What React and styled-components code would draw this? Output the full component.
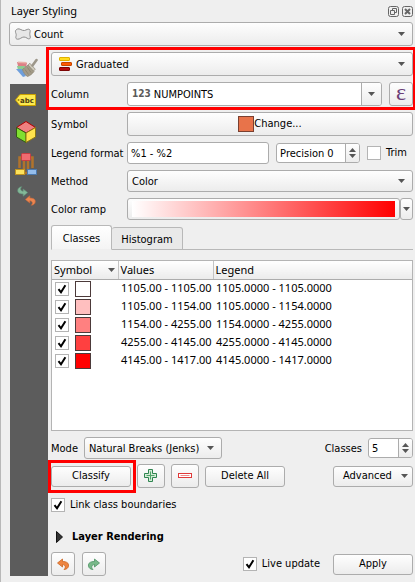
import React, { useState } from "react";
import styled, { createGlobalStyle, css } from "styled-components";

const GlobalStyle = createGlobalStyle`
  *, *::before, *::after { box-sizing: border-box; }
  body {
    margin: 0;
    background: #efefef;
    color: #000;
    font-family: "DejaVu Sans Condensed", "Noto Sans", Tahoma, sans-serif;
    font-size: 11px;
    line-height: 14px;
  }
  button, input, select { font: inherit; color: inherit; margin: 0; }
`;

const raised = css`
  background: linear-gradient(#fefefe, #ececec);
  border: 1px solid #acacac;
  border-radius: 3px;
`;

const Dock = styled.main`
  display: flex;
  flex-direction: column;
  min-height: 100vh;
  padding: 0 2px 6px 8px;
  border-left: 1px solid #b8b8b8;
`;

const TitleBar = styled.header`
  display: flex;
  align-items: center;
  height: 22px;
  padding-left: 2px;
  gap: 3px;
`;

const Title = styled.h1`
  flex: 1;
  margin: 0;
  font: 400 11px/16px "Noto Sans", "Segoe UI", sans-serif;
`;

const TitleButton = styled.button`
  display: flex;
  width: 11px;
  height: 11px;
  padding: 0;
  border: 0;
  background: none;
`;

const ComboFrame = styled.div`
  display: grid;
  align-items: center;
  flex: ${(p) => (p.$fit ? "none" : 1)};
  width: ${(p) => (p.$fit ? "138px" : "auto")};
  min-width: 0;
  height: ${(p) => (p.$tall ? 24 : 22)}px;
  ${raised}
  > * { grid-area: 1 / 1; }
  > svg { pointer-events: none; }
`;

const Select = styled.select`
  appearance: none;
  width: 100%;
  height: 100%;
  padding: 1px 16px 0 ${(p) => (p.$icon ? 24 : 4)}px;
  border: 0;
  background: none;
  outline-offset: -2px;
`;

const LeadIcon = styled.svg`
  width: 18px;
  height: 16px;
  margin-left: 4px;
`;

const Arrow = styled.svg`
  width: 7px;
  height: 4px;
  fill: #555;
`;

const ComboArrow = styled(Arrow)`
  justify-self: end;
  margin-right: 7px;
`;

const Body = styled.div`
  display: flex;
  flex: 1;
  padding-top: 4px;
`;

const Rail = styled.nav`
  display: flex;
  flex-direction: column;
  flex: none;
  width: 38px;
  margin-left: 1px;
  background: #5c5c5c;
`;

const RailTab = styled.button`
  display: flex;
  align-items: center;
  justify-content: center;
  height: ${(p) => (p.$active ? 34 : 32)}px;
  padding: 0 6px 0 0;
  border: 0;
  background: ${(p) => (p.$active ? "#efefef" : "none")};
`;

const RailIcon = styled.svg`
  width: 24px;
  height: 24px;
`;

const Panel = styled.div`
  display: flex;
  flex-direction: column;
  flex: 1;
  min-width: 0;
  padding: 2px 0 0 3px;
`;

const Marked = styled.div`
  position: relative;
  display: flex;
  flex-direction: column;
  gap: 6px;
  &::after {
    content: "";
    position: absolute;
    inset: ${(p) => p.$inset};
    border: 3px solid #f00;
    pointer-events: none;
  }
`;

const Row = styled.div`
  display: flex;
  align-items: center;
  gap: ${(p) => p.$gap || 7}px;
  height: ${(p) => p.$height || 22}px;
  margin-top: ${(p) => p.$top || 0}px;
`;

const FieldLabel = styled.label`
  flex: none;
  width: 69px;
  padding-top: 2px;
  white-space: nowrap;
`;

const Caption = styled.label`
  padding-top: 2px;
  white-space: nowrap;
`;

const Spacer = styled.span`
  flex: 1;
`;

const Field = styled.div`
  display: flex;
  align-items: stretch;
  flex: ${(p) => (p.$width ? "none" : 1)};
  width: ${(p) => (p.$width ? p.$width + "px" : "auto")};
  min-width: 0;
  height: ${(p) => p.$height || 22}px;
  border: 1px solid #acacac;
  border-radius: 3px;
  background: #fff;
  overflow: hidden;
`;

const TextInput = styled.input`
  flex: 1;
  width: 0;
  min-width: 0;
  padding: 2px 3px 0;
  border: 0;
  background: none;
  outline: 0;
`;

const TypeTag = styled.span`
  align-self: center;
  padding-left: 4px;
  color: #5a5a5a;
  font: 700 10px/12px "DejaVu Sans Condensed", "DejaVu Sans", sans-serif;
`;

const DropButton = styled.button`
  display: grid;
  place-items: center;
  width: 20px;
  padding: 0;
  border: 0;
  border-left: 1px solid #acacac;
  background: linear-gradient(#fefefe, #ececec);
`;

const Steppers = styled.div`
  display: flex;
  flex-direction: column;
  width: 14px;
  border-left: 1px solid #acacac;
  background: linear-gradient(#fefefe, #ececec);
`;

const StepButton = styled.button`
  display: flex;
  flex: 1;
  align-items: ${(p) => (p.$up ? "flex-end" : "flex-start")};
  justify-content: center;
  padding: 1px 0;
  border: 0;
  background: none;
`;

const Button = styled.button`
  display: flex;
  align-items: center;
  justify-content: center;
  flex: ${(p) => (p.$width ? "none" : 1)};
  width: ${(p) => (p.$width ? p.$width + "px" : "auto")};
  height: ${(p) => p.$height || 22}px;
  padding: 0;
  ${raised}
`;

const Epsilon = styled.span`
  padding-bottom: 5px;
  color: #6b3f78;
  font: 400 24px/18px "Liberation Serif", serif;
`;

const SplitButton = styled(Button)`
  justify-content: space-between;
  padding: 0 4px 0 9px;
`;

const SymbolSwatch = styled.span`
  flex: none;
  display: block;
  width: 16px;
  height: 16px;
  border: 1px solid ${(p) => p.$edge || "#4c3a3a"};
  background: ${(p) => p.$color};
`;

const CheckLabel = styled.label`
  display: flex;
  align-items: center;
  gap: 5px;
  margin-right: ${(p) => p.$after || 0}px;
  white-space: nowrap;
`;

const Check = styled.input`
  appearance: none;
  flex: none;
  width: 14px;
  height: 14px;
  border: 1px solid #b4b4b4;
  background: #fff;
  &:checked {
    background: #fff
      url("data:image/svg+xml,%3Csvg xmlns='http://www.w3.org/2000/svg' viewBox='0 0 12 12'%3E%3Cpath d='M2.5 6.2 5 9.3 9.4 2.3' fill='none' stroke='%23000' stroke-width='2'/%3E%3C/svg%3E");
  }
`;

const RampFrame = styled.div`
  display: flex;
  flex: 1;
  height: 22px;
`;

const RampButton = styled.button`
  flex: 1;
  padding: 2px 4px;
  ${raised}
`;

const Ramp = styled.span`
  display: block;
  height: 16px;
  background: linear-gradient(90deg, #fff, #f00);
`;

const RampDrop = styled.button`
  display: grid;
  place-items: center;
  width: 13px;
  padding: 0;
  ${raised}
`;

const Tabs = styled.div`
  display: flex;
  align-items: flex-end;
  height: 25px;
  margin: 5px 0 10px;
  box-shadow: inset 0 -1px #b8b8b8;
`;

const Tab = styled.button`
  width: ${(p) => (p.$active ? 61 : 71)}px;
  height: ${(p) => (p.$active ? 25 : 23)}px;
  padding: 2px 0 0;
  border: 1px solid #b8b8b8;
  border-bottom-color: ${(p) => (p.$active ? "#efefef" : "#b8b8b8")};
  border-left-width: ${(p) => (p.$active ? 1 : 0)}px;
  border-radius: 3px 3px 0 0;
  background: ${(p) => (p.$active ? "linear-gradient(#fff, #f4f4f4)" : "#e9e9e9")};
`;

const TableFrame = styled.div`
  flex: 1;
  min-height: 120px;
  border: 1px solid #b4b4b4;
  background: #fff;
`;

const Table = styled.table`
  width: 100%;
  table-layout: fixed;
  border-collapse: collapse;
  font: 11px/18px "Noto Sans", "Segoe UI", sans-serif;
`;

const HeadCell = styled.th`
  width: ${(p) => (p.$width ? p.$width + "px" : "auto")};
  height: 18px;
  padding: 0 3px 0 2px;
  border-bottom: 1px solid #acacac;
  border-right: ${(p) => (p.$width ? "1px solid #c4c4c4" : "0")};
  background: linear-gradient(#fff, #ebebeb);
  font-weight: 400;
  text-align: left;
`;

const HeadContent = styled.span`
  display: flex;
  align-items: center;
  justify-content: space-between;
`;

const Cell = styled.td`
  height: 18px;
  padding: 0 0 0 3px;
  white-space: nowrap;
  overflow: hidden;
  line-height: 16px;
  vertical-align: top;
`;

const SymbolCell = styled.label`
  display: flex;
  align-items: center;
  gap: 6px;
  height: 18px;
`;

const Group = styled.button`
  display: flex;
  align-items: center;
  gap: 9px;
  height: 18px;
  margin: 15px 0 6px 5px;
  padding: 0;
  border: 0;
  background: none;
  font-weight: 700;
`;

const Glyph = styled.svg`
  width: ${(p) => p.$size}px;
  height: ${(p) => p.$size}px;
`;

const Down = ({ as: Shape = Arrow }) => (
  <Shape viewBox="0 0 7 4" aria-hidden="true">
    <path d="M0 0h7L3.500 4z" />
  </Shape>
);

const Up = () => (
  <Arrow viewBox="0 0 7 4" aria-hidden="true">
    <path d="M0 4h7L3.500 0z" />
  </Arrow>
);

function Combo({ id, label, value, icon, tall, fit }) {
  return (
    <ComboFrame $tall={tall} $fit={fit}>
      {icon}
      <Select id={id} aria-label={label} $icon={Boolean(icon)} defaultValue={value}>
        <option>{value}</option>
      </Select>
      <Down as={ComboArrow} />
    </ComboFrame>
  );
}

function Spin({ id, label, prefix = "", initial, width }) {
  const [value, setValue] = useState(initial);
  return (
    <Field $width={width} $height={20}>
      <TextInput
        id={id}
        aria-label={label}
        value={prefix + value}
        onChange={(e) => setValue(Number(e.target.value.replace(/\D/g, "")))}
      />
      <Steppers>
        <StepButton $up aria-label="Increase" onClick={() => setValue(value + 1)}><Up /></StepButton>
        <StepButton aria-label="Decrease" onClick={() => setValue(Math.max(0, value - 1))}><Down /></StepButton>
      </Steppers>
    </Field>
  );
}

const PolygonIcon = () => (
  <LeadIcon viewBox="0 0 18 16">
    <path d="M3.500 3C5.500 2 8 5 10.500 4.500C12.500 4 14 2.500 15.500 3.500C17 4.500 15.500 7 15.800 8.500C16 10.500 17 12 15.500 12.800C14 13.500 12.500 11 10 11C7.500 11 6 13.500 3.500 13.200C.5 12.800 2.500 10 2.200 8.500C2 7 0 4.500 3.500 3Z" fill="#e7e7e7" stroke="#8d8d8d" />
  </LeadIcon>
);

const GraduatedIcon = () => (
  <LeadIcon viewBox="0 0 18 16">
    <rect x="3.500" y="1.500" width="10" height="3" rx=".5" fill="#ffdc1c" stroke="#e0b000" />
    <rect x="5.500" y="6.500" width="10" height="3" rx=".5" fill="#ff5a00" stroke="#c64600" />
    <rect x="3.500" y="11.500" width="10" height="3" rx=".5" fill="#b80c0c" stroke="#7d0505" />
  </LeadIcon>
);

const BrushIcon = () => (
  <RailIcon viewBox="0 0 24 24">
    <path d="M3 7 13 8l-1 4-8-1z" fill="#dd7f86" />
    <path d="M4 6.500 13 7l-1 1.500-8-.5z" fill="#e9b0a8" />
    <path d="M3 11h8l-1 5-6-1z" fill="#8ccb90" />
    <path d="M2 14l6 0 4 7-3 1z" fill="#6f9fdc" />
    <path d="M8.500 14.500 14 10l6 6.500c-1.500 2-3.500 4-6.500 5-2.500-1.500-4-4-5-7z" fill="#a39b88" stroke="#867e6d" strokeWidth=".7" />
    <path d="m11 14.500 3.500 5M13.500 12.500l3.500 5" stroke="#857c6a" strokeWidth=".7" />
    <path d="m14 10 1.800-1.800 5.500 6L19.500 16z" fill="#cfcabb" stroke="#8c8678" strokeWidth=".7" />
    <path d="M18.500 10.500 22.500 5" stroke="#9d978a" strokeWidth="2.600" strokeLinecap="round" />
  </RailIcon>
);

const LabelIcon = () => (
  <RailIcon viewBox="0 0 24 24">
    <path d="M1.500 12 5 7.500Q5.500 6.500 7 6.500H21.500V17.500H7Q5.500 17.500 5 16.500z" fill="#fce94f" stroke="#c9a000" />
    <circle cx="4.500" cy="12" r="1" fill="#a18510" />
    <text x="6" y="15" fontFamily="DejaVu Sans, sans-serif" fontWeight="700" fontSize="7" fill="#4d3d10">abc</text>
  </RailIcon>
);

const CubeIcon = () => (
  <RailIcon viewBox="0 0 24 24">
    <path d="m12 1.500 9.500 6L12 13 2.500 7.500z" fill="#f08080" stroke="#b30000" />
    <path d="m2.500 7.500 9.500 5.500v9.500L2.500 17z" fill="#80e030" stroke="#315d12" />
    <path d="M21.500 7.500 12 13v9.500l9.500-5.500z" fill="#ffe34d" stroke="#8c7610" />
  </RailIcon>
);

const DiagramIcon = () => (
  <RailIcon viewBox="0 0 24 24">
    <path d="M5.500 16V5.500H9M10 9v12h4V9M15 5.500h3.500V16" fill="none" stroke="#b0732c" strokeWidth="2.500" />
    <rect x="7.500" y="1.500" width="9" height="7" rx="1" fill="#ef6b70" stroke="#c93c42" />
    <rect x="1.500" y="17.500" width="9" height="5" fill="#fce25c" stroke="#bd9320" />
    <rect x="13.500" y="17.500" width="9" height="5" fill="#94bdec" stroke="#4c79ad" />
  </RailIcon>
);

const hookArrow = "M1.500 6 6.500 2v2.500C10.500 4.500 13 6 12.500 9 12.200 11 10.500 12.500 8 12.500 9.800 11 10 8 6.500 7.500V10z";

const HistoryIcon = () => (
  <RailIcon viewBox="0 0 24 24">
    <path transform="matrix(-.9 0 0 -.9 15 14)" d={hookArrow} fill="#84b898" stroke="#5f9179" strokeWidth=".7" />
    <path transform="matrix(.9 0 0 .9 10 10)" d={hookArrow} fill="#ec8650" stroke="#c9683a" strokeWidth=".7" />
  </RailIcon>
);

const HookArrow = ({ color, edge, flip }) => (
  <Glyph $size={14} viewBox="0 0 14 14">
    <path
      transform={flip ? "matrix(-1 0 0 1 14 0)" : undefined}
      d={hookArrow}
      fill={color}
      stroke={edge}
      strokeWidth=".8"
    />
  </Glyph>
);

const railTabs = [
  ["Symbology", BrushIcon],
  ["Labels", LabelIcon],
  ["3D view", CubeIcon],
  ["Diagrams", DiagramIcon],
  ["History", HistoryIcon],
];

const classes = [
  ["#ffffff", "1105.00 - 1105.00", "1105.0000 - 1105.0000"],
  ["#ffbfbf", "1105.00 - 1154.00", "1105.0000 - 1154.0000"],
  ["#ff8080", "1154.00 - 4255.00", "1154.0000 - 4255.0000"],
  ["#ff4040", "4255.00 - 4145.00", "4255.0000 - 4145.0000"],
  ["#ff0000", "4145.00 - 1417.00", "4145.0000 - 1417.0000"],
];

export default function App() {
  return (
    <>
      <GlobalStyle />
      <Dock>
        <TitleBar>
          <Title>Layer Styling</Title>
          <TitleButton aria-label="Float">
            <svg width="11" height="11" viewBox="0 0 11 11" fill="none" stroke="#666">
              <rect x=".5" y=".5" width="10" height="10" rx="2" />
              <path d="M4.500 4.500v-2h4v4h-2M2.500 4.500h4v4h-4z" />
            </svg>
          </TitleButton>
          <TitleButton aria-label="Close">
            <svg width="11" height="11" viewBox="0 0 11 11" fill="none" stroke="#666">
              <rect x=".5" y=".5" width="10" height="10" rx="2" />
              <path d="m3 3 5 5m0-5-5 5" strokeWidth="2" />
            </svg>
          </TitleButton>
        </TitleBar>
        <Row $height={24}>
          <Combo label="Layer" value="Count" icon={<PolygonIcon />} tall />
        </Row>
        <Body>
          <Rail aria-label="Styling sections">
            {railTabs.map(([name, Icon], i) => (
              <RailTab key={name} aria-label={name} $active={i === 0}><Icon /></RailTab>
            ))}
          </Rail>
          <Panel>
            <Marked $inset="-5px -3px -4px -5px">
              <Row $height={24}>
                <Combo label="Renderer" value="Graduated" icon={<GraduatedIcon />} tall />
              </Row>
              <Row $height={24}>
                <FieldLabel htmlFor="column">Column</FieldLabel>
                <Field $height={24}>
                  <TypeTag>123</TypeTag>
                  <TextInput id="column" defaultValue="NUMPOINTS" />
                  <DropButton aria-label="Choose column"><Down /></DropButton>
                </Field>
                <Button $width={24} $height={24} aria-label="Expression"><Epsilon>ε</Epsilon></Button>
              </Row>
            </Marked>
            <Row $height={24} $top={6}>
              <FieldLabel htmlFor="symbol">Symbol</FieldLabel>
              <Button id="symbol" $height={24}>
                <SymbolSwatch $color="#e8734a" $edge="#7a4030" />Change...
              </Button>
            </Row>
            <Row $top={6}>
              <FieldLabel htmlFor="format">Legend format</FieldLabel>
              <Field><TextInput id="format" defaultValue="%1 - %2" /></Field>
              <Spin label="Precision" prefix="Precision " initial={0} width={84} />
              <CheckLabel $after={6}><Check type="checkbox" />Trim</CheckLabel>
            </Row>
            <Row $top={6}>
              <FieldLabel htmlFor="method">Method</FieldLabel>
              <Combo id="method" value="Color" />
            </Row>
            <Row $top={6}>
              <FieldLabel htmlFor="ramp">Color ramp</FieldLabel>
              <RampFrame>
                <RampButton id="ramp"><Ramp /></RampButton>
                <RampDrop aria-label="Choose color ramp"><Down /></RampDrop>
              </RampFrame>
            </Row>
            <Tabs role="tablist">
              <Tab role="tab" aria-selected="true" $active>Classes</Tab>
              <Tab role="tab" aria-selected="false">Histogram</Tab>
            </Tabs>
            <TableFrame>
              <Table>
                <thead>
                  <tr>
                    <HeadCell $width={66}><HeadContent>Symbol<Down /></HeadContent></HeadCell>
                    <HeadCell $width={95}>Values</HeadCell>
                    <HeadCell>Legend</HeadCell>
                  </tr>
                </thead>
                <tbody>
                  {classes.map(([color, values, legend]) => (
                    <tr key={color}>
                      <Cell>
                        <SymbolCell>
                          <Check type="checkbox" defaultChecked aria-label={legend} />
                          <SymbolSwatch $color={color} />
                        </SymbolCell>
                      </Cell>
                      <Cell>{values}</Cell>
                      <Cell>{legend}</Cell>
                    </tr>
                  ))}
                </tbody>
              </Table>
            </TableFrame>
            <Row $top={6} $gap={6}>
              <Caption htmlFor="mode">Mode</Caption>
              <Combo id="mode" value="Natural Breaks (Jenks)" fit />
              <Spacer />
              <Caption htmlFor="classes">Classes</Caption>
              <Spin id="classes" initial={5} width={45} />
            </Row>
            <Row $height={24} $top={5} $gap={6}>
              <Marked $inset="-6px -5px -6px -3px">
                <Button $width={80} $height={21}>Classify</Button>
              </Marked>
              <Button $width={28} $height={24} aria-label="Add class">
                <Glyph $size={16} viewBox="0 0 16 16">
                  <path d="M5.500 1.500h4v4h4v4h-4v4h-4v-4h-4v-4h4z" fill="#d6ecd8" stroke="#2f8550" />
                  <path d="M7.500 3.500v8M3.500 7.500h8" stroke="#4fa468" />
                </Glyph>
              </Button>
              <Button $width={28} $height={24} aria-label="Remove class">
                <Glyph $size={16} viewBox="0 0 16 16">
                  <rect x="1.500" y="5.500" width="13" height="4" fill="#fff" stroke="#e03a3a" />
                  <path d="M3.500 7.500h9" stroke="#ee8a8a" />
                </Glyph>
              </Button>
              <Button $width={80} $height={21}>Delete All</Button>
              <Spacer />
              <SplitButton $width={80} $height={21}>Advanced<Down /></SplitButton>
            </Row>
            <Row $height={16} $top={9}>
              <CheckLabel><Check type="checkbox" defaultChecked />Link class boundaries</CheckLabel>
            </Row>
            <Group>
              <svg width="7" height="12" viewBox="0 0 7 12"><path d="M.5.5 6.500 6l-6 5.500z" fill="#333" stroke="#111" /></svg>
              Layer Rendering
            </Group>
            <Row $height={24}>
              <Button $width={24} $height={24} aria-label="Undo"><HookArrow color="#ee8440" edge="#cc6420" /></Button>
              <Button $width={24} $height={24} aria-label="Redo"><HookArrow color="#79b98a" edge="#4d9363" flip /></Button>
              <Spacer />
              <CheckLabel $after={6}><Check type="checkbox" defaultChecked />Live update</CheckLabel>
              <Button $width={80} $height={21}>Apply</Button>
            </Row>
          </Panel>
        </Body>
      </Dock>
    </>
  );
}
